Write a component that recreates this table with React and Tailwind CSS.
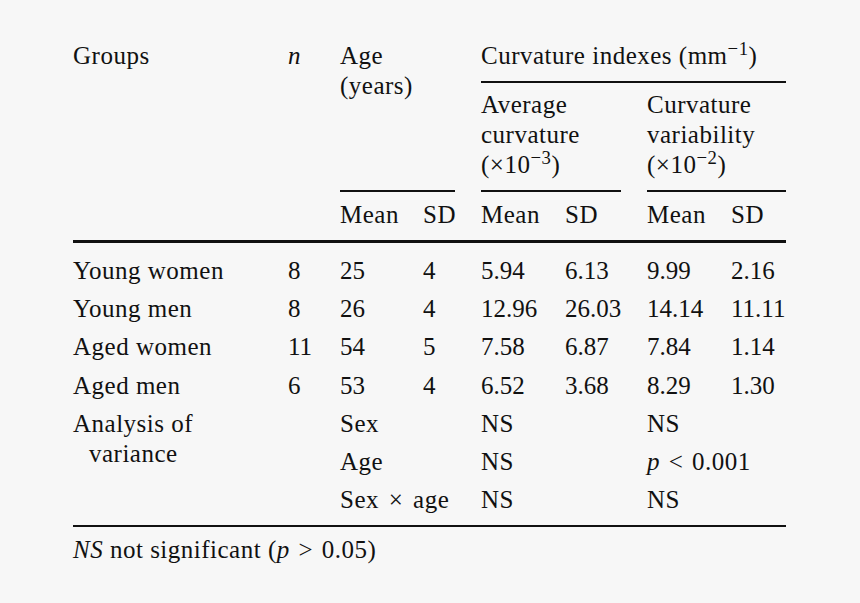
const cols = ["col-start-1", "col-start-2", "col-start-3", "col-start-4", "col-start-6", "col-start-7", "col-start-9", "col-start-10"];
const dataRows = ["row-start-7", "row-start-8", "row-start-9", "row-start-10"];

const groups = [
  ["Young women", "8", "25", "4", "5.94", "6.13", "9.99", "2.16"],
  ["Young men", "8", "26", "4", "12.96", "26.03", "14.14", "11.11"],
  ["Aged women", "11", "54", "5", "7.58", "6.87", "7.84", "1.14"],
  ["Aged men", "6", "53", "4", "6.52", "3.68", "8.29", "1.30"],
];

function Rule({ className }) {
  return <div className={`bg-[#111] ${className}`} />;
}

export default function App() {
  return (
    <div className="min-h-screen bg-[#f7f7f7] pl-[73px] pt-[41px] font-['Liberation_Serif',serif] text-[25px] text-[#111] leading-[30px] tracking-[0.5px]">
      <div className="grid w-[713px] grid-cols-[215px_52px_83px_32px_26px_84px_56px_26px_84px_55px] grid-rows-[30px_19px_90px_20px_30px_22px_repeat(7,38.2px)_16px_30px] whitespace-nowrap">
        {/* header */}
        <div className="col-start-1 row-start-1">Groups</div>
        <div className="col-start-2 row-start-1 italic">n</div>
        <div className="col-start-3 col-span-3 row-start-1 row-span-3">
          <div>Age</div>
          <div>(years)</div>
        </div>
        <div className="col-start-6 col-span-5 row-start-1">
          Curvature indexes (mm<sup>−1</sup>)
        </div>
        <Rule className="col-start-6 col-span-5 row-start-2 mt-[10px] h-[2px]" />
        <div className="col-start-6 col-span-2 row-start-3">
          <div>Average</div>
          <div>curvature</div>
          <div>(×10<sup>−3</sup>)</div>
        </div>
        <div className="col-start-9 col-span-2 row-start-3">
          <div>Curvature</div>
          <div>variability</div>
          <div>(×10<sup>−2</sup>)</div>
        </div>
        <Rule className="col-start-3 col-span-2 row-start-4 mt-[10px] h-[2px]" />
        <Rule className="col-start-6 col-span-2 row-start-4 mt-[10px] h-[2px]" />
        <Rule className="col-start-9 col-span-2 row-start-4 mt-[10px] h-[2px]" />
        <div className="col-start-3 row-start-5">Mean</div>
        <div className="col-start-4 row-start-5">SD</div>
        <div className="col-start-6 row-start-5">Mean</div>
        <div className="col-start-7 row-start-5">SD</div>
        <div className="col-start-9 row-start-5">Mean</div>
        <div className="col-start-10 row-start-5">SD</div>
        <Rule className="col-start-1 col-span-10 row-start-6 mt-[10px] h-[3px]" />

        {/* groups */}
        {groups.map((row, r) =>
          row.map((v, c) => (
            <div
              key={`${r}-${c}`}
              className={`${cols[c]} ${dataRows[r]} self-center ${c > 0 ? "tracking-normal" : ""}`}
            >
              {v}
            </div>
          ))
        )}

        {/* analysis of variance */}
        <div className="col-start-1 row-start-11 self-start mt-[4px]">
          <div>Analysis of</div>
          <div className="pl-[16px]">variance</div>
        </div>
        <div className="col-start-3 col-span-3 row-start-11 self-center">Sex</div>
        <div className="col-start-6 row-start-11 self-center">NS</div>
        <div className="col-start-9 row-start-11 self-center">NS</div>
        <div className="col-start-3 col-span-3 row-start-12 self-center">Age</div>
        <div className="col-start-6 row-start-12 self-center">NS</div>
        <div className="col-start-9 col-span-2 row-start-12 self-center">
          <span className="italic">p</span> <span className="mx-[2px]">&lt;</span> 0.001
        </div>
        <div className="col-start-3 col-span-3 row-start-13 self-center">
          Sex <span className="mx-[3px]">×</span> age
        </div>
        <div className="col-start-6 row-start-13 self-center">NS</div>
        <div className="col-start-9 row-start-13 self-center">NS</div>
        <Rule className="col-start-1 col-span-10 row-start-14 mt-[6px] h-[2px]" />

        {/* footnote */}
        <div className="col-start-1 col-span-10 row-start-15">
          <span className="italic">NS</span> not significant (<span className="italic">p</span>{" "}
          <span className="mx-[2px]">&gt;</span> 0.05)
        </div>
      </div>
    </div>
  );
}
